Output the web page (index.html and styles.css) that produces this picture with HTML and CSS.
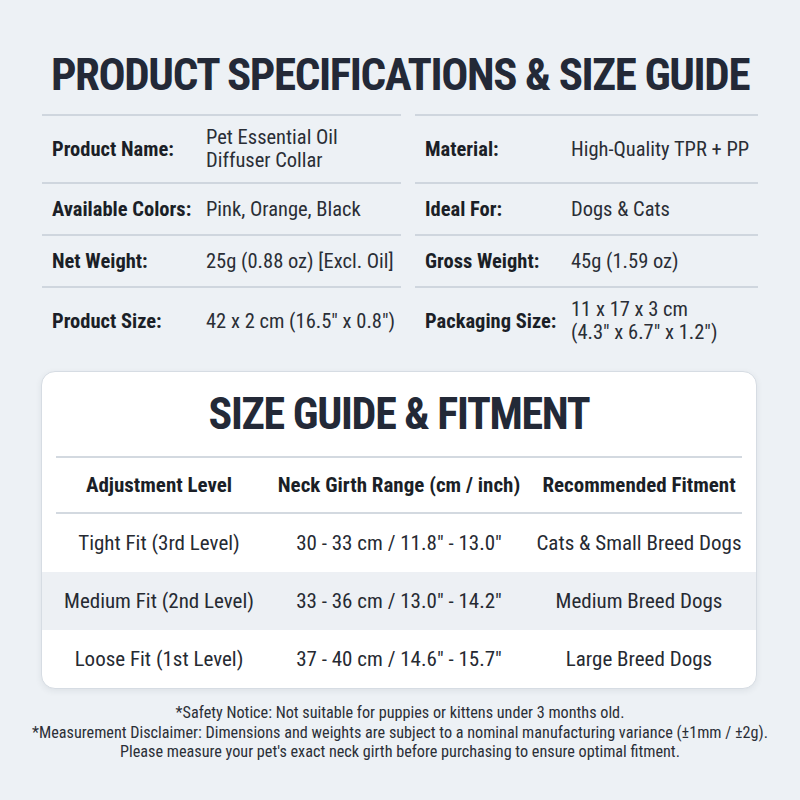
FILE: index.html
```html
<!DOCTYPE html>
<html>
<head>
<meta charset="utf-8">
<link rel="stylesheet" href="styles.css">
</head>
<body>
<main class="page">
  <h1 class="title">PRODUCT SPECIFICATIONS &amp; SIZE GUIDE</h1>
  <section class="specs">
    <div class="spec spec-l"><span class="label">Product Name:</span><span class="value">Pet Essential Oil<br>Diffuser Collar</span></div>
    <div class="spec spec-r"><span class="label">Material:</span><span class="value">High-Quality TPR + PP</span></div>
    <div class="spec spec-l"><span class="label">Available Colors:</span><span class="value">Pink, Orange, Black</span></div>
    <div class="spec spec-r"><span class="label">Ideal For:</span><span class="value">Dogs &amp; Cats</span></div>
    <div class="spec spec-l"><span class="label">Net Weight:</span><span class="value">25g (0.88 oz) [Excl. Oil]</span></div>
    <div class="spec spec-r"><span class="label">Gross Weight:</span><span class="value">45g (1.59 oz)</span></div>
    <div class="spec spec-l"><span class="label">Product Size:</span><span class="value">42 x 2 cm (16.5" x 0.8")</span></div>
    <div class="spec spec-r"><span class="label">Packaging Size:</span><span class="value">11 x 17 x 3 cm<br>(4.3" x 6.7" x 1.2")</span></div>
  </section>
  <section class="card">
    <h2 class="card-title">SIZE GUIDE &amp; FITMENT</h2>
    <div class="thead">
      <span>Adjustment Level</span>
      <span>Neck Girth Range (cm / inch)</span>
      <span>Recommended Fitment</span>
    </div>
    <div class="trow">
      <span>Tight Fit (3rd Level)</span>
      <span>30 - 33 cm / 11.8" - 13.0"</span>
      <span>Cats &amp; Small Breed Dogs</span>
    </div>
    <div class="trow alt">
      <span>Medium Fit (2nd Level)</span>
      <span>33 - 36 cm / 13.0" - 14.2"</span>
      <span>Medium Breed Dogs</span>
    </div>
    <div class="trow last">
      <span>Loose Fit (1st Level)</span>
      <span>37 - 40 cm / 14.6" - 15.7"</span>
      <span>Large Breed Dogs</span>
    </div>
  </section>
  <footer class="notes">
    <p>*Safety Notice: Not suitable for puppies or kittens under 3 months old.</p>
    <p>*Measurement Disclaimer: Dimensions and weights are subject to a nominal manufacturing variance (±1mm / ±2g).</p>
    <p>Please measure your pet's exact neck girth before purchasing to ensure optimal fitment.</p>
  </footer>
</main>
</body>
</html>
```

FILE: styles.css
```css
* { box-sizing: border-box; }
html, body { margin: 0; padding: 0; }
body {
  background: #edf1f5;
  font-family: Roboto, "Noto Sans", sans-serif;
  font-stretch: 75%;
  color: #23272f;
  width: 800px;
  height: 800px;
  overflow: hidden;
}
.page { padding-top: 52px; }
.title {
  margin: 0;
  text-align: center;
  font-size: 45px;
  line-height: 46px;
  font-weight: 700;
  color: #232937;
  letter-spacing: -1.4px;
}
.specs {
  margin: 16px 0 0 42px;
  display: grid;
  grid-template-columns: 359px 343px;
  column-gap: 14px;
}
.spec {
  border-top: 2px solid #cfd6de;
  min-height: 52px;
  padding: 10px 0 10px 10px;
  display: grid;
  align-items: center;
  font-size: 20.5px;
  line-height: 23px;
}
.spec-l { grid-template-columns: 154px 1fr; }
.spec-r { grid-template-columns: 146px 1fr; }
.label { font-weight: 700; color: #1b1f27; white-space: nowrap; }
.value { color: #2a2e36; white-space: nowrap; }
.card {
  margin: 17px 0 0 41px;
  width: 716px;
  background: #ffffff;
  border: 1px solid #d6dce3;
  border-radius: 14px;
  box-shadow: 0 2px 6px rgba(40, 50, 70, 0.08);
  padding-top: 20px;
  overflow: hidden;
}
.card-title {
  margin: 0 0 20px;
  text-align: center;
  font-size: 44px;
  line-height: 1;
  font-weight: 700;
  color: #232937;
  letter-spacing: -1.3px;
}
.thead, .trow {
  display: grid;
  grid-template-columns: 206px 274px 206px;
  align-items: center;
  text-align: center;
  font-size: 21px;
  white-space: nowrap;
}
.thead {
  margin: 0 14px;
  height: 58px;
  border-top: 2px solid #d3d9e0;
  border-bottom: 2px solid #d3d9e0;
  font-weight: 700;
  color: #1b1f27;
}
.trow {
  padding: 0 14px;
  height: 58px;
  color: #262a32;
}
.trow:first-of-type { height: 59px; }
.trow.alt { background: #edf0f4; }
.notes {
  margin-top: 14px;
  text-align: center;
  font-size: 16.2px;
  line-height: 19.5px;
  color: #2b2f37;
}
.notes p { margin: 0; }
```
